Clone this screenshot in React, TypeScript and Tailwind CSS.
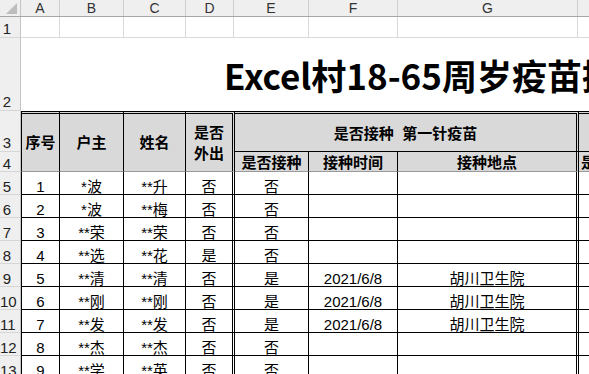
const FONT = "font-['Liberation_Sans','Noto_Sans_CJK_SC',sans-serif]";

const rows = [
  { n: '1', a: '*波', b: '**升', c: '否', d: '否', e: '', f: '' },
  { n: '2', a: '*波', b: '**梅', c: '否', d: '否', e: '', f: '' },
  { n: '3', a: '**荣', b: '**荣', c: '否', d: '否', e: '', f: '' },
  { n: '4', a: '**选', b: '**花', c: '是', d: '否', e: '', f: '' },
  { n: '5', a: '**清', b: '**清', c: '否', d: '是', e: '2021/6/8', f: '胡川卫生院' },
  { n: '6', a: '**刚', b: '**刚', c: '否', d: '是', e: '2021/6/8', f: '胡川卫生院' },
  { n: '7', a: '**发', b: '**发', c: '否', d: '是', e: '2021/6/8', f: '胡川卫生院' },
  { n: '8', a: '**杰', b: '**杰', c: '否', d: '否', e: '', f: '' },
  { n: '9', a: '**学', b: '**英', c: '否', d: '否', e: '', f: '' },
];

const RowHead = ({ label, className = '' }: { label: string; className?: string }) => (
  <div
    className={`w-[21px] shrink-0 bg-[#efefef] border-r border-b border-r-[#c4c4c4] border-b-[#d6d6d6] flex items-end text-[15px] leading-[15px] text-[#222] ${className}`}
  >
    <span className="w-[14px] text-center">{label}</span>
  </div>
);

const cell = 'flex items-end justify-center border-b border-black text-[15px] leading-[15px] whitespace-nowrap';

const App = () => {
  return (
    <div className={`w-[589px] h-[374px] overflow-hidden bg-white text-black ${FONT}`}>
      {/* column letters */}
      <div className="flex h-[17px] bg-[#efefef] border-b border-[#a6a6a6] text-[14px] leading-[16px] text-[#333]">
        <div className="w-[21px] shrink-0 border-r border-[#c4c4c4] relative">
          <svg className="absolute left-0 top-0" width="20" height="16" viewBox="0 0 20 16">
            <polygon points="17,3 17,14 6,14" fill="#bdbdbd" />
          </svg>
        </div>
        <div className="w-[39px] shrink-0 border-r border-[#cfcfcf] text-center">A</div>
        <div className="w-[64px] shrink-0 border-r border-[#cfcfcf] text-center">B</div>
        <div className="w-[62px] shrink-0 border-r border-[#cfcfcf] text-center">C</div>
        <div className="w-[48px] shrink-0 border-r border-[#cfcfcf] text-center">D</div>
        <div className="w-[75px] shrink-0 border-r border-[#cfcfcf] text-center">E</div>
        <div className="w-[89px] shrink-0 border-r border-[#cfcfcf] text-center">F</div>
        <div className="w-[180px] shrink-0 border-r border-[#cfcfcf] text-center">G</div>
        <div className="flex-1" />
      </div>

      {/* row 1 */}
      <div className="flex h-[21px]">
        <RowHead label="1" className="pb-[1px]" />
        <div className="w-[39px] shrink-0 border-r border-b border-[#d9d9d9]" />
        <div className="w-[64px] shrink-0 border-r border-b border-[#d9d9d9]" />
        <div className="w-[62px] shrink-0 border-r border-b border-[#d9d9d9]" />
        <div className="w-[48px] shrink-0 border-r border-b border-[#d9d9d9]" />
        <div className="w-[75px] shrink-0 border-r border-b border-[#d9d9d9]" />
        <div className="w-[89px] shrink-0 border-r border-b border-[#d9d9d9]" />
        <div className="w-[180px] shrink-0 border-r border-b border-[#d9d9d9]" />
        <div className="flex-1 border-b border-[#d9d9d9]" />
      </div>

      {/* row 2: title */}
      <div className="flex h-[73px]">
        <RowHead label="2" className="pb-[1px]" />
        <div className="flex-1 overflow-hidden whitespace-nowrap pl-[203px] pt-[19px] font-['Noto_Sans_CJK_SC',sans-serif] font-bold text-[35px] leading-[36px]">
          Excel村18-65周岁疫苗接种
        </div>
      </div>

      {/* rows 3-4: header */}
      <div className="flex h-[61px]">
        <div className="w-[21px] shrink-0 flex flex-col">
          <RowHead label="3" className="h-[41px] pb-[1px]" />
          <RowHead label="4" className="h-[20px] border-b-[#9a9a9a]" />
        </div>
        <div className="flex-1 flex bg-[#d9d9d9] font-bold">
          <div className="w-[39px] shrink-0 border-l border-r border-black border-t-[3px] border-double border-b border-b-[#9a9a9a] flex items-center justify-center text-[15px] pt-[2px]">
            序号
          </div>
          <div className="w-[64px] shrink-0 border-r border-black border-t-[3px] border-double border-b border-b-[#9a9a9a] flex items-center justify-center text-[15px] pt-[2px]">
            户主
          </div>
          <div className="w-[62px] shrink-0 border-r border-black border-t-[3px] border-double border-b border-b-[#9a9a9a] flex items-center justify-center text-[15px] pt-[2px]">
            姓名
          </div>
          <div className="w-[49px] shrink-0 border-r-[3px] border-black border-t-[3px] border-double border-b border-b-[#9a9a9a] flex flex-col items-center justify-center text-[15px] leading-[21px] pt-[1px]">
            <span>是否</span>
            <span>外出</span>
          </div>
          <div className="w-[344px] shrink-0 flex flex-col">
            <div className="h-[41px] border-t-[3px] border-r-[3px] border-double border-black border-b border-b-black flex items-center justify-center text-[15px] pt-[3px]">
              是否接种&nbsp;&nbsp;第一针疫苗
            </div>
            <div className="h-[20px] flex text-[15px] leading-[17px]">
              <div className="w-[74px] shrink-0 border-r border-black border-b border-b-[#9a9a9a] flex items-end justify-center">是否接种</div>
              <div className="w-[89px] shrink-0 border-r border-black border-b border-b-[#9a9a9a] flex items-end justify-center">接种时间</div>
              <div className="w-[181px] shrink-0 border-r-[3px] border-double border-black border-b border-b-[#9a9a9a] flex items-end justify-center">接种地点</div>
            </div>
          </div>
          <div className="flex-1 flex flex-col overflow-hidden">
            <div className="h-[41px] border-t-[3px] border-double border-black border-b border-b-black" />
            <div className="h-[20px] border-b border-[#9a9a9a] flex items-end pl-[2px] text-[15px] leading-[17px] whitespace-nowrap">是否接种</div>
          </div>
        </div>
      </div>

      {/* data rows */}
      {rows.map((r) => (
        <div key={r.n} className="flex h-[23px]">
          <RowHead label={String(Number(r.n) + 4)} className="pb-0" />
          <div className={`w-[39px] shrink-0 border-l border-r ${cell}`}>{r.n}</div>
          <div className={`w-[64px] shrink-0 border-r ${cell}`}>{r.a}</div>
          <div className={`w-[62px] shrink-0 border-r ${cell}`}>{r.b}</div>
          <div className={`w-[49px] shrink-0 border-r-[3px] border-double ${cell}`}>{r.c}</div>
          <div className={`w-[74px] shrink-0 border-r ${cell}`}>{r.d}</div>
          <div className={`w-[89px] shrink-0 border-r ${cell}`}>{r.e}</div>
          <div className={`w-[181px] shrink-0 border-r-[3px] border-double ${cell}`}>{r.f}</div>
          <div className={`flex-1 ${cell}`} />
        </div>
      ))}
    </div>
  );
};

export default App;
